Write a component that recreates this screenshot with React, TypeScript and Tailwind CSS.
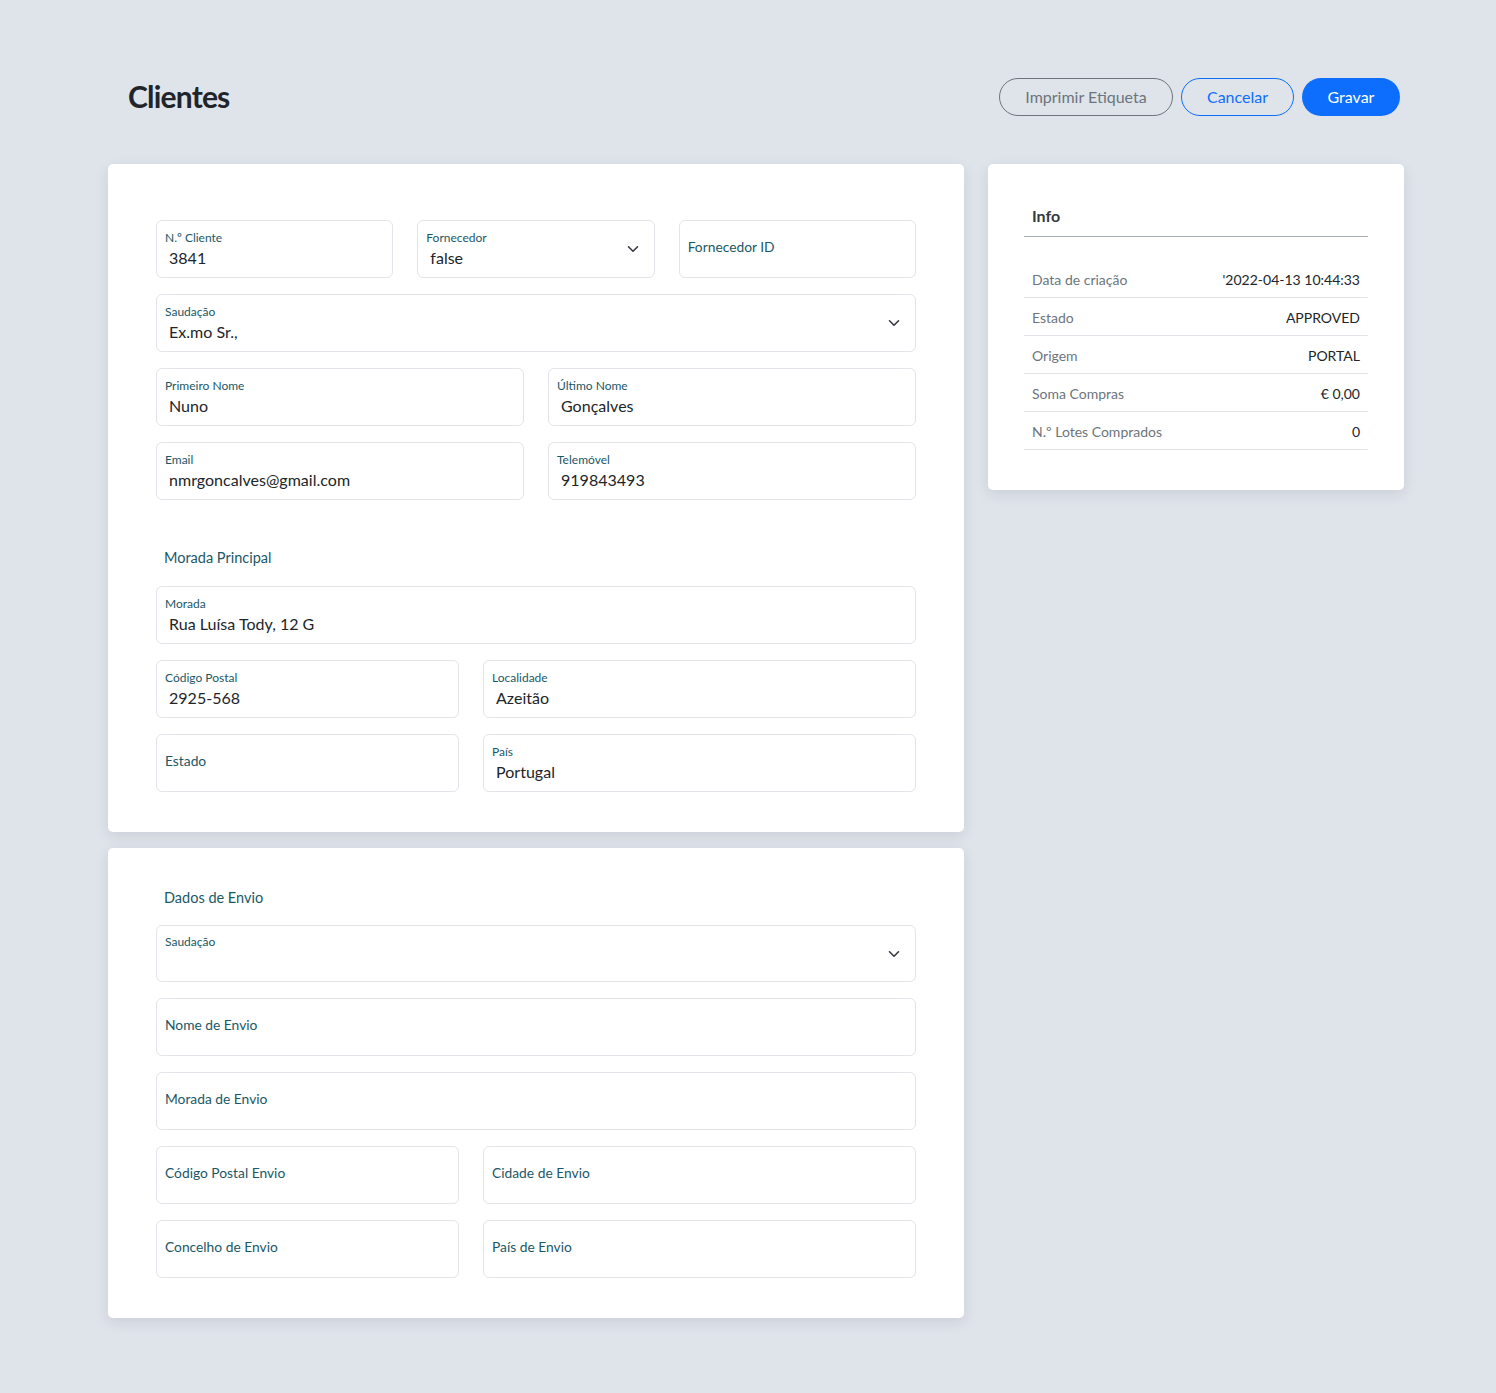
import React from "react";

const font = { fontFamily: "Lato, 'Open Sans', sans-serif" };

function Chevron() {
  return (
    <svg className="absolute right-[15px] top-1/2 -translate-y-1/2" width="12" height="8" viewBox="0 0 12 8" fill="none">
      <path d="M1.5 1.75L6 6.25L10.5 1.75" stroke="#343a40" strokeWidth="1.6" strokeLinecap="round" strokeLinejoin="round" />
    </svg>
  );
}

function Field({ label, value, select, className = "" }: { label: string; value?: string; select?: boolean; className?: string }) {
  const filled = value !== undefined;
  return (
    <div className={`relative h-[58px] rounded-[6px] border border-[#e2e4e9] bg-white px-[8px] ${className}`}>
      {filled ? (
        <div className="pt-[9px]">
          <div className="text-[12px] leading-[16px] text-[#1b5866]">{label}</div>
          <div className="pl-[4px] text-[16px] leading-[24px] tracking-[0.02px] text-[#212529]">{value}</div>
        </div>
      ) : (
        <div className="flex h-full items-center pb-[3px] text-[13.8px] text-[#1b5866]">{label}</div>
      )}
      {select && <Chevron />}
    </div>
  );
}

function InfoRow({ label, value }: { label: string; value: string }) {
  return (
    <div className="flex h-[38px] items-center justify-between border-b border-[#e2e4e9] px-[8px] pt-[1px] text-[14px]">
      <span className="text-[#6c757d]">{label}</span>
      <span className="text-[#212529]">{value}</span>
    </div>
  );
}

export default function App() {
  return (
    <div style={font} className="min-h-[1393px] w-full bg-[#dfe3ea] pt-[78px]">
      <div className="ml-[108px] w-[1296px]">
        <div className="flex items-center justify-between pl-[20px] pr-[4px]">
          <h1 className="-mt-[2px] text-[30px] font-bold leading-[38px] tracking-[-0.8px] text-[#212529]">Clientes</h1>
          <div className="flex gap-[8px]">
            <button className="h-[38px] w-[174px] rounded-full border border-[#6c757d] text-[16px] text-[#6c757d]">Imprimir Etiqueta</button>
            <button className="h-[38px] w-[113px] rounded-full border border-[#0d6efd] text-[16px] text-[#0d6efd]">Cancelar</button>
            <button className="h-[38px] w-[98px] rounded-full bg-[#0d6efd] text-[16px] text-white">Gravar</button>
          </div>
        </div>

        <div className="mt-[48px] flex items-start gap-[24px]">
          <div className="flex w-[856px] flex-col gap-[16px]">
            <div className="rounded-[5px] bg-white px-[48px] pb-[40px] pt-[56px] shadow-[0_4px_14px_rgba(30,40,60,0.10)]">
              <div className="grid grid-cols-3 gap-x-[24px]">
                <Field label="N.º Cliente" value="3841" />
                <Field label="Fornecedor" value="false" select />
                <Field label="Fornecedor ID" />
              </div>
              <Field className="mt-[16px]" label="Saudação" value="Ex.mo Sr.," select />
              <div className="mt-[16px] grid grid-cols-2 gap-x-[24px]">
                <Field label="Primeiro Nome" value="Nuno" />
                <Field label="Último Nome" value="Gonçalves" />
              </div>
              <div className="mt-[16px] grid grid-cols-2 gap-x-[24px]">
                <Field label="Email" value="nmrgoncalves@gmail.com" />
                <Field label="Telemóvel" value="919843493" />
              </div>
              <div className="mt-[46px] pl-[8px] text-[14.5px] leading-[24px] text-[#1b5866]">Morada Principal</div>
              <Field className="mt-[16px]" label="Morada" value="Rua Luísa Tody, 12 G" />
              <div className="mt-[16px] grid grid-cols-[303px_1fr] gap-x-[24px]">
                <Field label="Código Postal" value="2925-568" />
                <Field label="Localidade" value="Azeitão" />
              </div>
              <div className="mt-[16px] grid grid-cols-[303px_1fr] gap-x-[24px]">
                <Field label="Estado" />
                <Field label="País" value="Portugal" />
              </div>
            </div>

            <div className="rounded-[5px] bg-white px-[48px] pb-[40px] pt-[38px] shadow-[0_4px_14px_rgba(30,40,60,0.10)]">
              <div className="pl-[8px] text-[14.5px] leading-[24px] text-[#1b5866]">Dados de Envio</div>
              <div className="relative mt-[15px] h-[57px] rounded-[6px] border border-[#e2e4e9] bg-white px-[8px] pt-[8px]">
                <div className="text-[12px] leading-[16px] text-[#1b5866]">Saudação</div>
                <Chevron />
              </div>
              <Field className="mt-[16px]" label="Nome de Envio" />
              <Field className="mt-[16px]" label="Morada de Envio" />
              <div className="mt-[16px] grid grid-cols-[303px_1fr] gap-x-[24px]">
                <Field label="Código Postal Envio" />
                <Field label="Cidade de Envio" />
              </div>
              <div className="mt-[16px] grid grid-cols-[303px_1fr] gap-x-[24px]">
                <Field label="Concelho de Envio" />
                <Field label="País de Envio" />
              </div>
            </div>
          </div>

          <div className="w-[416px] rounded-[5px] bg-white px-[36px] pb-[40px] pt-[40px] shadow-[0_4px_14px_rgba(30,40,60,0.10)]">
            <div className="border-b border-[#a7aeb8] px-[8px] pb-[8px] text-[16px] font-bold leading-[24px] text-[#343a40]">Info</div>
            <div className="mt-[23px]">
              <InfoRow label="Data de criação" value="'2022-04-13 10:44:33" />
              <InfoRow label="Estado" value="APPROVED" />
              <InfoRow label="Origem" value="PORTAL" />
              <InfoRow label="Soma Compras" value="€ 0,00" />
              <InfoRow label="N.º Lotes Comprados" value="0" />
            </div>
          </div>
        </div>
      </div>
    </div>
  );
}
